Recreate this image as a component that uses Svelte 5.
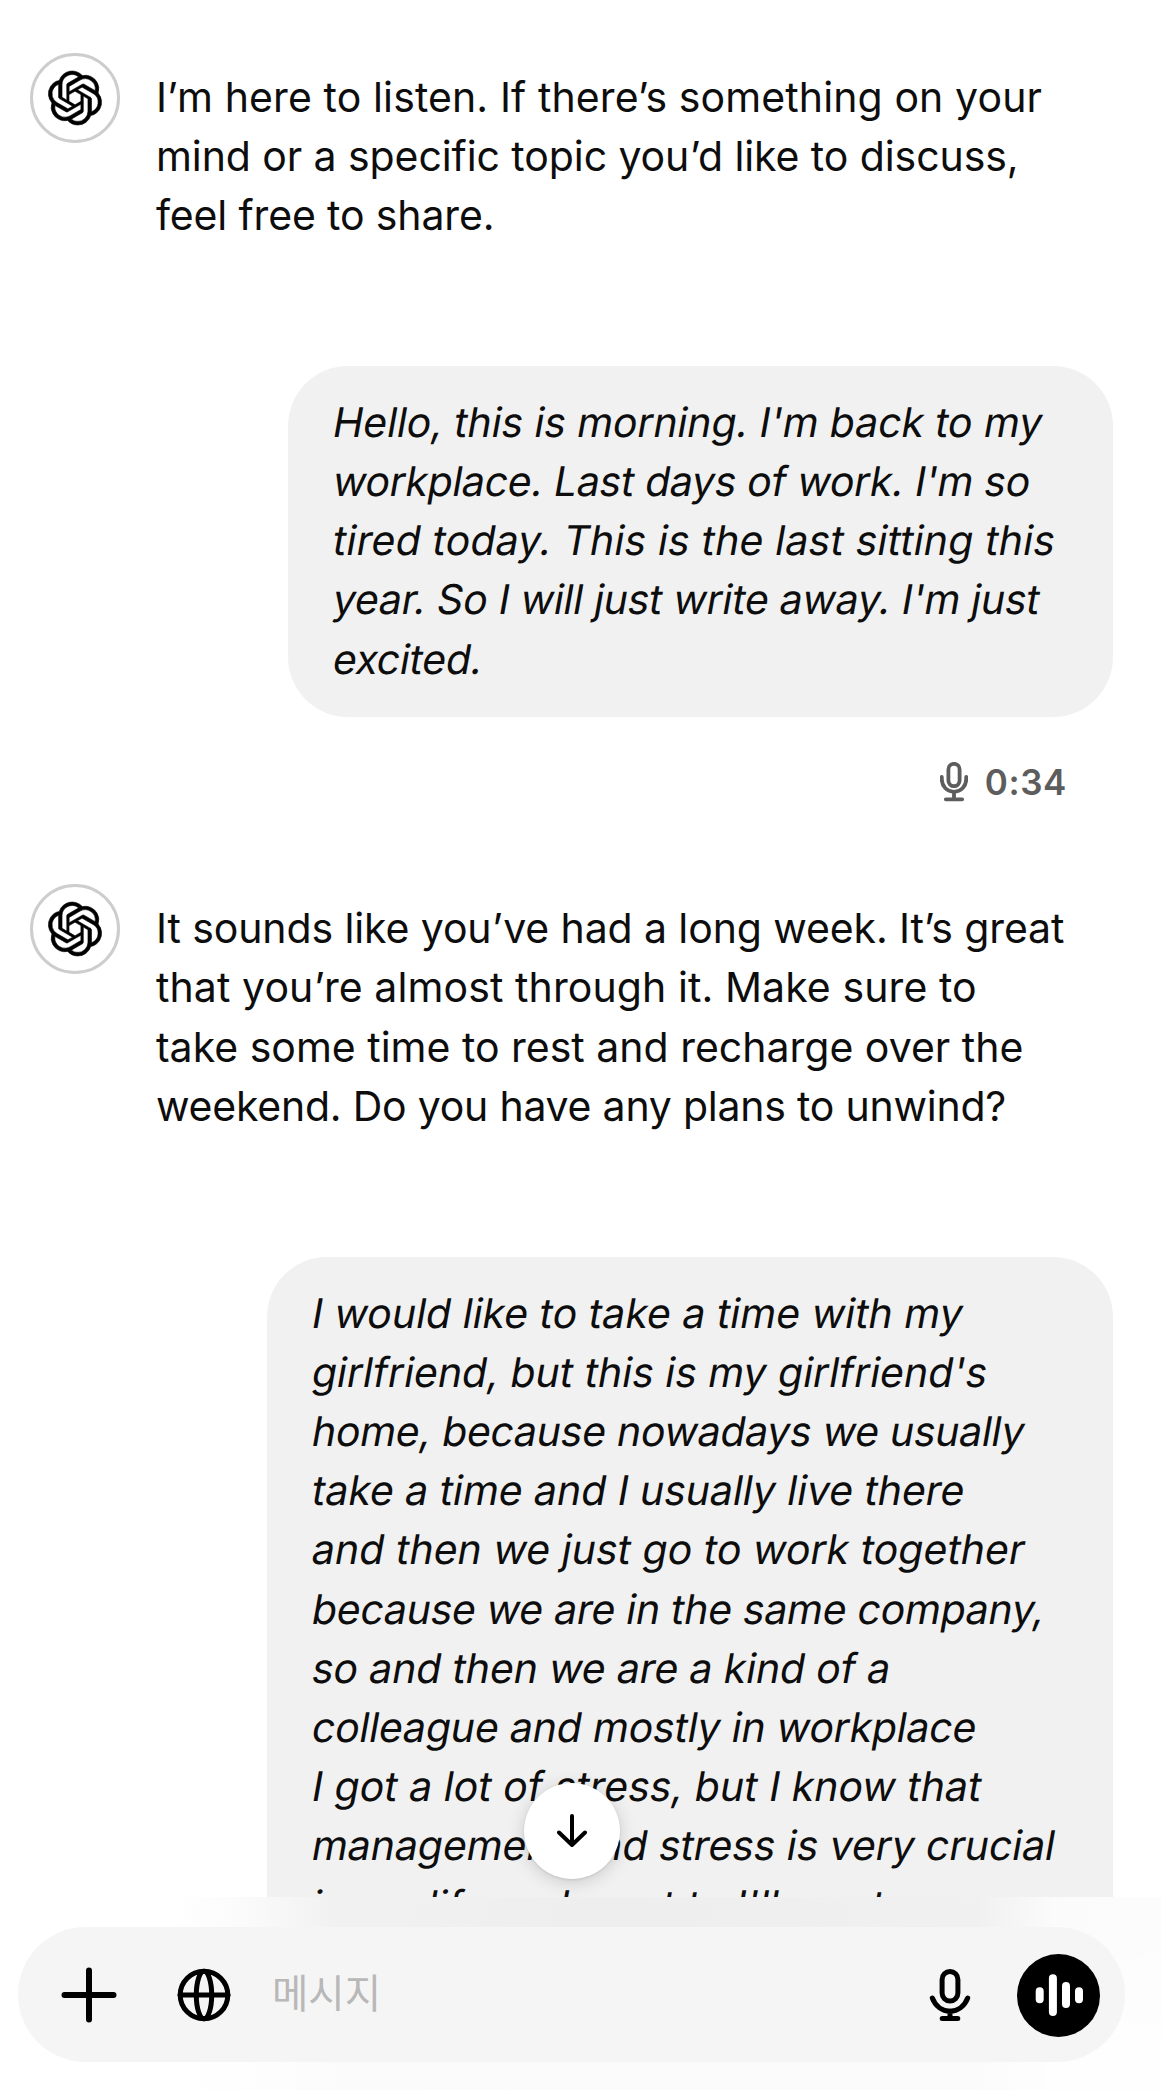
<script lang="ts">
  interface Line {
    text: string;
    tracking: number;
  }

  interface Message {
    role: 'assistant' | 'user';
    lines: Line[];
    duration?: string;
  }

  // tracking is letter spacing in px
  const messages: Message[] = [
    {
      role: 'assistant',
      lines: [
        { text: 'I’m here to listen. If there’s something on your', tracking: 0.11 },
        { text: 'mind or a specific topic you’d like to discuss,', tracking: -0.08 },
        { text: 'feel free to share.', tracking: -0.14 }
      ]
    },
    {
      role: 'user',
      duration: '0:34',
      lines: [
        { text: "Hello, this is morning. I'm back to my", tracking: -0.12 },
        { text: "workplace. Last days of work. I'm so", tracking: -0.33 },
        { text: 'tired today. This is the last sitting this', tracking: 0.16 },
        { text: "year. So I will just write away. I'm just", tracking: -0.28 },
        { text: 'excited.', tracking: -0.3 }
      ]
    },
    {
      role: 'assistant',
      lines: [
        { text: 'It sounds like you’ve had a long week. It’s great', tracking: -0.11 },
        { text: 'that you’re almost through it. Make sure to', tracking: 0.09 },
        { text: 'take some time to rest and recharge over the', tracking: 0 },
        { text: 'weekend. Do you have any plans to unwind?', tracking: -0.23 }
      ]
    },
    {
      role: 'user',
      lines: [
        { text: 'I would like to take a time with my', tracking: 0 },
        { text: "girlfriend, but this is my girlfriend's", tracking: -0.03 },
        { text: 'home, because nowadays we usually', tracking: -0.3 },
        { text: 'take a time and I usually live there', tracking: -0.07 },
        { text: 'and then we just go to work together', tracking: 0.02 },
        { text: 'because we are in the same company,', tracking: -0.29 },
        { text: 'so and then we are a kind of a', tracking: -0.15 },
        { text: 'colleague and mostly in workplace', tracking: -0.21 },
        { text: 'I got a lot of stress, but I know that', tracking: 0 },
        { text: 'management and stress is very crucial', tracking: -0.08 },
        { text: "in my life and want to I'll want", tracking: 0 }
      ]
    }
  ];
</script>

{#snippet textLines(lines: Line[])}
  {#each lines as line}
    <span class="line" style="letter-spacing: {line.tracking}px">{line.text}</span>
  {/each}
{/snippet}

<div class="screen">
  <main class="thread">
    {#each messages as message}
      {#if message.role === 'assistant'}
        <div class="assistant">
          <div class="avatar">
            <svg viewBox="0 0 24 24" width="54" height="54">
              <path d="M22.282 9.821a5.985 5.985 0 0 0-.516-4.91 6.046 6.046 0 0 0-6.51-2.9A6.065 6.065 0 0 0 4.981 4.18a5.985 5.985 0 0 0-3.998 2.9 6.046 6.046 0 0 0 .743 7.097 5.98 5.98 0 0 0 .51 4.911 6.051 6.051 0 0 0 6.515 2.9A5.985 5.985 0 0 0 13.26 24a6.056 6.056 0 0 0 5.772-4.206 5.99 5.99 0 0 0 3.997-2.9 6.056 6.056 0 0 0-.747-7.073zM13.26 22.43a4.476 4.476 0 0 1-2.876-1.04l.141-.081 4.779-2.758a.795.795 0 0 0 .392-.681v-6.737l2.02 1.168a.071.071 0 0 1 .038.052v5.583a4.504 4.504 0 0 1-4.494 4.494zM3.6 18.304a4.47 4.47 0 0 1-.535-3.014l.142.085 4.783 2.759a.771.771 0 0 0 .78 0l5.843-3.369v2.332a.08.08 0 0 1-.033.062L9.74 19.95a4.5 4.5 0 0 1-6.14-1.646zM2.34 7.896a4.485 4.485 0 0 1 2.366-1.973V11.6a.766.766 0 0 0 .388.676l5.815 3.355-2.02 1.168a.076.076 0 0 1-.071 0l-4.83-2.786A4.504 4.504 0 0 1 2.34 7.872zm16.597 3.855l-5.833-3.387L15.119 7.2a.076.076 0 0 1 .071 0l4.83 2.791a4.494 4.494 0 0 1-.676 8.105v-5.678a.79.79 0 0 0-.407-.667zm2.01-3.023l-.141-.085-4.774-2.782a.776.776 0 0 0-.785 0L9.409 9.23V6.897a.066.066 0 0 1 .028-.061l4.83-2.787a4.5 4.5 0 0 1 6.68 4.66zm-12.64 4.135l-2.02-1.164a.08.08 0 0 1-.038-.057V6.075a4.5 4.5 0 0 1 7.375-3.453l-.142.08L8.704 5.46a.795.795 0 0 0-.393.681zm1.097-2.365l2.602-1.5 2.607 1.5v2.999l-2.597 1.5-2.607-1.5z" />
            </svg>
          </div>
          <p class="text">{@render textLines(message.lines)}</p>
        </div>
      {:else}
        <div class="user" class:short={message.duration}>
          <p class="text bubble">{@render textLines(message.lines)}</p>
          {#if message.duration}
            <div class="voice">
              <svg viewBox="0 0 28 40" width="28" height="40">
                <rect x="8.4" y="1.8" width="11.2" height="22.4" rx="5.6" />
                <path d="M1.8 15v2.6a12.2 12.2 0 0 0 24.4 0V15M14 30v6.5M5.8 37.3h16.4" />
              </svg>
              <span>{message.duration}</span>
            </div>
          {/if}
        </div>
      {/if}
    {/each}
  </main>

  <button class="scroll-down" aria-label="Scroll down">
    <svg viewBox="0 0 30 34" width="30" height="34">
      <path d="M15 2v29M2 18.5l13 12.5 13-12.5" />
    </svg>
  </button>

  <footer class="dock">
    <div class="composer">
      <svg class="plus" viewBox="0 0 56 56" width="56" height="56">
        <path d="M28 3.5v49M3.5 28h49" />
      </svg>
      <svg class="globe" viewBox="0 0 54 54" width="54" height="54">
        <circle cx="27" cy="27" r="23.8" />
        <ellipse cx="27" cy="27" rx="7.7" ry="23.8" />
        <path d="M3 27h48" />
      </svg>
      <span class="placeholder">메시지</span>
      <svg class="mic" viewBox="0 0 42 54" width="42" height="54">
        <rect x="13.1" y="3.5" width="15.8" height="29.5" rx="7.9" />
        <path d="M3.3 30c3 7.8 9.5 13.2 17.7 13.2S35.7 37.8 38.700 30M21 43v7M13.2 50.5h15.6" />
      </svg>
      <div class="wave">
        <svg viewBox="0 0 48 42" width="48" height="42">
          <path d="M4.7 17.200v8M17.9 4.200v33.700M31 12v18M44 17.200v8" />
        </svg>
      </div>
    </div>
  </footer>
</div>

<style>
  :global(body) {
    margin: 0;
    background: #fff;
  }

  .screen {
    position: relative;
    width: 1161px;
    height: 2090px;
    overflow: hidden;
    background: #fff;
    color: #0d0d0d;
    font-family: Inter, 'Noto Sans CJK KR', sans-serif;
  }

  .thread {
    display: flex;
    flex-direction: column;
    padding: 52.6px 48px 0 30px;
  }

  .text {
    margin: 0;
    font-size: 41px;
    line-height: 59.2px;
    white-space: nowrap;
  }

  .line {
    display: block;
  }

  .assistant {
    display: flex;
    align-items: flex-start;
    gap: 36px;
    padding-bottom: 121px;
  }

  .assistant .text {
    padding-top: 15px;
  }

  .avatar {
    box-sizing: border-box;
    display: flex;
    align-items: center;
    justify-content: center;
    width: 90px;
    height: 90px;
    border: 3px solid #cdcdcd;
    border-radius: 50%;
  }

  .user {
    display: flex;
    flex-direction: column;
    align-items: flex-end;
    height: 518px;
  }

  .bubble {
    box-sizing: border-box;
    width: 846px;
    padding: 26.5px 45px 28.5px 43px;
    border-radius: 60px;
    background: #f1f1f1;
  }

  /* slants the upright face, so the double-storey a stays */
  .bubble .line {
    transform: skewX(-10deg);
    transform-origin: 0 44px;
  }

  .short .bubble {
    width: 825px;
  }

  .voice {
    display: flex;
    align-items: center;
    gap: 17px;
    padding: 45px 46px 0 0;
    color: #5d5d5d;
    font-size: 35px;
    font-weight: 600;
    letter-spacing: 0.6px;
    line-height: 40px;
  }

  svg {
    display: block;
    flex: none;
    fill: none;
    stroke: currentColor;
    stroke-linecap: round;
    stroke-linejoin: round;
  }

  .avatar svg {
    fill: #000;
    stroke: #000;
    stroke-width: 0.25;
    overflow: visible;
  }

  .voice svg {
    stroke-width: 3.8;
  }

  .scroll-down {
    position: absolute;
    top: 1783px;
    left: 524px;
    display: flex;
    align-items: center;
    justify-content: center;
    width: 96px;
    height: 96px;
    padding: 0;
    border: 0;
    border-radius: 50%;
    background: #fff;
    color: #000;
    box-shadow: 0 3px 18px rgba(0, 0, 0, 0.16), 0 1px 3px rgba(0, 0, 0, 0.1);
  }

  .scroll-down svg {
    stroke-width: 4;
  }

  .dock {
    position: absolute;
    left: 0;
    right: 0;
    bottom: 0;
    box-sizing: border-box;
    height: 193px;
    padding: 30px 36px 28px 18px;
    background:
      linear-gradient(to bottom, transparent 30px, rgba(255, 255, 255, 0.75) 165px),
      linear-gradient(to right, #fff 170px, #fbfbfb 240px, #f1f1f1 335px, #eee 600px, #f0f0f0 975px, #fbfbfb 1055px, #fcfcfc);
  }

  .composer {
    box-sizing: border-box;
    display: flex;
    align-items: center;
    height: 135px;
    padding: 1px 25px 0 43px;
    border-radius: 68px;
    background: #f5f5f5;
    color: #000;
  }

  .plus {
    stroke-width: 6;
  }

  .globe {
    margin-left: 60px;
    stroke-width: 5;
  }

  .placeholder {
    flex: 1;
    margin-left: 41px;
    padding-bottom: 3px;
    color: #b8b8b8;
    font-size: 39.5px;
    line-height: 60px;
  }

  .mic {
    stroke-width: 5;
  }

  .wave {
    display: flex;
    align-items: center;
    justify-content: center;
    width: 83px;
    height: 83px;
    margin-left: 46px;
    border-radius: 50%;
    background: #000;
    color: #fff;
  }

  .wave svg {
    stroke-width: 8;
  }
</style>
